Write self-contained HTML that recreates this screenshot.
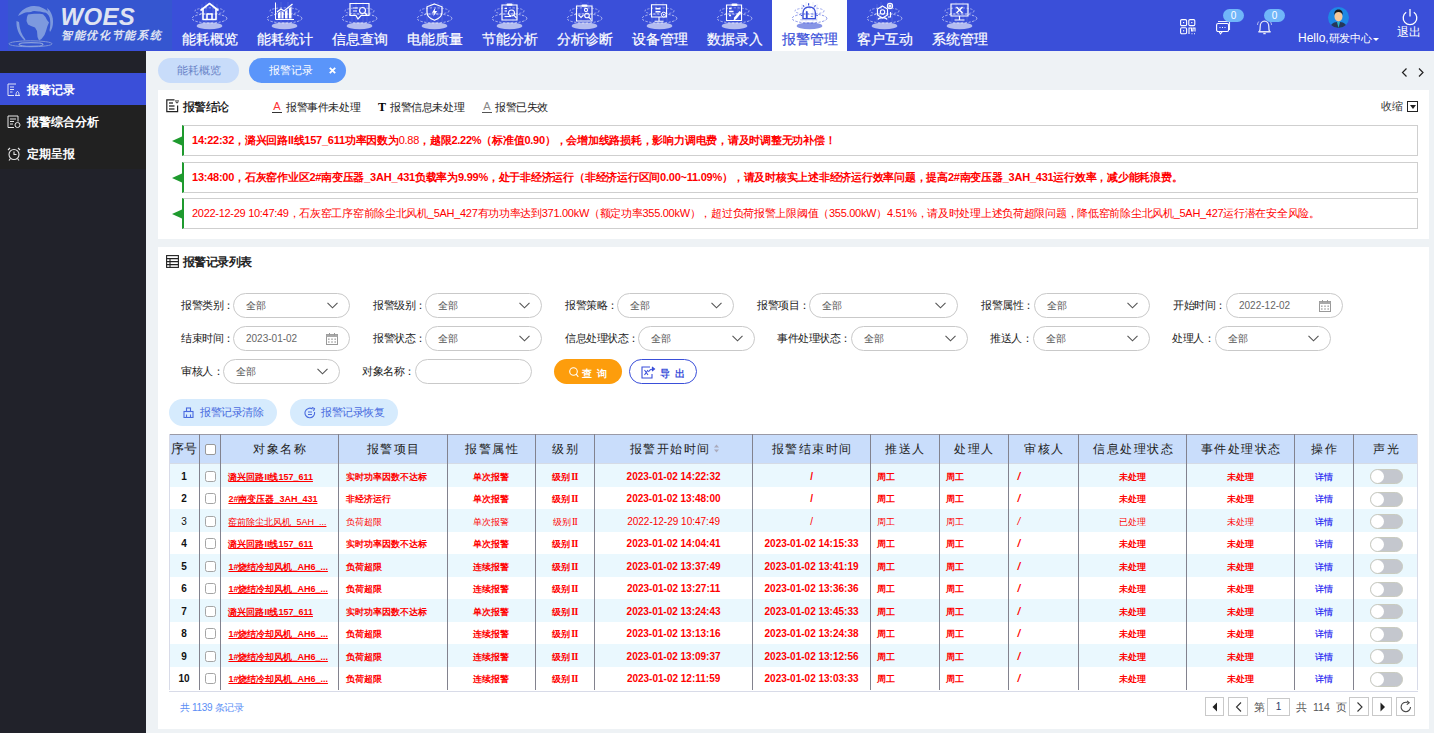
<!DOCTYPE html><html><head><meta charset="utf-8"><style>
*{box-sizing:border-box;margin:0;padding:0}
html,body{width:1434px;height:733px;overflow:hidden;background:#eef2f5;font-family:"Liberation Sans",sans-serif;color:#333}
.a{position:absolute;white-space:nowrap}
#hdr{position:absolute;left:0;top:0;width:1434px;height:51px;background:#3a4fd9}
#logo{position:absolute;left:8px;top:0;width:164px;height:50px;background:#3556d0}
.nav{position:absolute;top:0;width:75px;height:51px;color:#fff;text-align:center}
.nav.on{background:#fff;color:#3a4fd9}
.nav svg{position:absolute;left:19px;top:0}
.nav span{position:absolute;left:0;right:0;top:31px;font-size:14.3px;line-height:16px;letter-spacing:0;-webkit-text-stroke:0.2px currentColor}
#side{position:absolute;left:0;top:51px;width:146px;height:682px;background:#21222a}
.si{position:absolute;left:0;width:146px;height:32px;color:#fff;font-size:12.3px;font-weight:bold;line-height:35px;padding-left:27px;background:#212121}
.si.on{background:#3a4fd9}
.si svg{position:absolute;left:7px;top:10px}
.tab{position:absolute;top:58px;height:25px;border-radius:13px;font-size:11px;line-height:25px}
.panel{position:absolute;left:158px;width:1271px;background:#fff}
.f11{font-size:11px;letter-spacing:-0.4px}
.alert{position:absolute;left:182px;width:1236px;height:31px;border:1px solid #cfcfcf;border-left:2px solid #1e9a2e;color:#f00;font-size:11px;letter-spacing:-0.29px;line-height:29px;padding-left:8px}
.alert:before{content:"";position:absolute;left:-12px;top:10px;border-right:11px solid #1e9a2e;border-top:5px solid transparent;border-bottom:5px solid transparent}
.lbl{position:absolute;font-size:11px;letter-spacing:-0.45px;color:#222;line-height:25px}
.sel{position:absolute;height:25px;border:1px solid #c9c9c9;border-radius:13px;font-size:10px;color:#555;line-height:23px;padding-left:12px;background:#fff}
.sel svg{position:absolute;right:11px;top:8px}
.btn{position:absolute;height:25px;border-radius:13px;font-size:11px;line-height:25px}
table{position:absolute;left:168px;top:434px;border-collapse:collapse;table-layout:fixed}
</style></head><body>
<div id="hdr"><div id="logo">
<svg class="a" style="left:0;top:0" width="164" height="50" viewBox="0 0 164 50">
<defs><radialGradient id="gl" cx="45%" cy="40%" r="60%"><stop offset="0" stop-color="#7d98dc"/><stop offset="1" stop-color="#5877cf"/></radialGradient></defs>
<g fill="#7d99de">
<path d="M20 14.5 C24 13.8 30 13.5 35 14.3 L37.5 17 L39 20 L41 22.5 L39.5 26 L38 31 L36.5 35 L33.5 39 L31 40.5 L29.5 37 L29 31 L27 27.5 L23 26 L20 24.5 L18.5 21 L19 17 Z"/>
<path d="M10 16 C13 10 19 6.5 25 6 C32 5.5 39 9 43 15 L44.5 19 L42.5 18 C40 14 38 12 36 12.5 L32 11.5 C29 12 26 10 23 12 C20 12.5 18 12 16 13 C14 14 12 15 10 16 Z"/>
<path d="M8.5 21 C8 28 10.5 35 16.5 40.5 L17.5 39.5 C13.5 35 11.5 29 11 22 Z"/>
<path d="M39 8 C43 11 45 16 45 22 C45 26 44 29 42 32 L41.5 30 C42.5 26 43 20 40.5 14 Z"/>
</g>
<ellipse cx="22.5" cy="43.8" rx="21.5" ry="3" fill="none" stroke="#7f95d8" stroke-width="1"/>
<ellipse cx="23" cy="44.5" rx="12" ry="1.8" fill="none" stroke="#8aa0dc" stroke-width="1.2"/>
<text x="52.5" y="24.5" font-family="Liberation Sans" font-size="24" font-weight="bold" font-style="italic" fill="#dfe3f2" letter-spacing="0.3">WOES</text>
<text x="53" y="38.7" font-size="11" font-weight="bold" font-style="italic" fill="#dfe3f2" letter-spacing="1.7">智能优化节能系统</text>
</svg>
</div>
<div class="nav" style="left:172px"><svg width="37" height="30" viewBox="0 0 37 30"><ellipse cx="18.5" cy="25.9" rx="12.8" ry="3.3" fill="#b4bcf0"/><ellipse cx="18.5" cy="18.4" rx="17.4" ry="4.6" fill="none" stroke="#ffffff" stroke-opacity=".75" stroke-width=".8" stroke-dasharray="2.2 1.6"/><ellipse cx="18.5" cy="11" rx="14.7" ry="3.2" fill="none" stroke="#ffffff" stroke-opacity=".6" stroke-width=".8" stroke-dasharray="2.2 1.6"/><g stroke="#ffffff" stroke-opacity=".12" stroke-width="1"><line x1="11" y1="4" x2="11" y2="23"/><line x1="15" y1="2" x2="15" y2="23"/><line x1="22" y1="2" x2="22" y2="23"/><line x1="26" y1="4" x2="26" y2="23"/></g><g fill="none" stroke="#ffffff" stroke-width="1.6" stroke-linejoin="round"><path d="M9.5 10.5 L18.5 3.5 L27.5 10.5"/><path d="M12 9 V19.5 H25 V9"/><path d="M16 19.5 V14 H21 V19.5"/></g></svg><span>能耗概览</span></div>
<div class="nav" style="left:247px"><svg width="37" height="30" viewBox="0 0 37 30"><ellipse cx="18.5" cy="25.9" rx="12.8" ry="3.3" fill="#b4bcf0"/><ellipse cx="18.5" cy="18.4" rx="17.4" ry="4.6" fill="none" stroke="#ffffff" stroke-opacity=".75" stroke-width=".8" stroke-dasharray="2.2 1.6"/><ellipse cx="18.5" cy="11" rx="14.7" ry="3.2" fill="none" stroke="#ffffff" stroke-opacity=".6" stroke-width=".8" stroke-dasharray="2.2 1.6"/><g stroke="#ffffff" stroke-opacity=".12" stroke-width="1"><line x1="11" y1="4" x2="11" y2="23"/><line x1="15" y1="2" x2="15" y2="23"/><line x1="22" y1="2" x2="22" y2="23"/><line x1="26" y1="4" x2="26" y2="23"/></g><g stroke="#ffffff" fill="none" stroke-width="1"><path d="M9.5 2.5 V19.5 H28"/><path d="M11 12 L15 9 L18 11 L26.5 4" stroke-width="1.3"/></g><g fill="#ffffff"><path d="M12 13 L14.5 11 V18.5 H12Z"/><path d="M15.5 11 L17.5 12.2 V18.5 H15.5Z"/><path d="M19 11.5 L21.5 9.5 V18.5 H19Z"/><path d="M23 8.5 L25.5 6.5 V18.5 H23Z"/></g></svg><span>能耗统计</span></div>
<div class="nav" style="left:322px"><svg width="37" height="30" viewBox="0 0 37 30"><ellipse cx="18.5" cy="25.9" rx="12.8" ry="3.3" fill="#b4bcf0"/><ellipse cx="18.5" cy="18.4" rx="17.4" ry="4.6" fill="none" stroke="#ffffff" stroke-opacity=".75" stroke-width=".8" stroke-dasharray="2.2 1.6"/><ellipse cx="18.5" cy="11" rx="14.7" ry="3.2" fill="none" stroke="#ffffff" stroke-opacity=".6" stroke-width=".8" stroke-dasharray="2.2 1.6"/><g stroke="#ffffff" stroke-opacity=".12" stroke-width="1"><line x1="11" y1="4" x2="11" y2="23"/><line x1="15" y1="2" x2="15" y2="23"/><line x1="22" y1="2" x2="22" y2="23"/><line x1="26" y1="4" x2="26" y2="23"/></g><g fill="none" stroke="#ffffff" stroke-width="1.2"><path d="M9 3.5 H28 V15.5 H20 L17 19 L15 15.5 H9 Z"/><path d="M12 8 H17 M12 11 H16"/><circle cx="21.5" cy="10.5" r="3"/><path d="M23.8 12.8 L26.5 15.5"/></g></svg><span>信息查询</span></div>
<div class="nav" style="left:397px"><svg width="37" height="30" viewBox="0 0 37 30"><ellipse cx="18.5" cy="25.9" rx="12.8" ry="3.3" fill="#b4bcf0"/><ellipse cx="18.5" cy="18.4" rx="17.4" ry="4.6" fill="none" stroke="#ffffff" stroke-opacity=".75" stroke-width=".8" stroke-dasharray="2.2 1.6"/><ellipse cx="18.5" cy="11" rx="14.7" ry="3.2" fill="none" stroke="#ffffff" stroke-opacity=".6" stroke-width=".8" stroke-dasharray="2.2 1.6"/><g stroke="#ffffff" stroke-opacity=".12" stroke-width="1"><line x1="11" y1="4" x2="11" y2="23"/><line x1="15" y1="2" x2="15" y2="23"/><line x1="22" y1="2" x2="22" y2="23"/><line x1="26" y1="4" x2="26" y2="23"/></g><g fill="none" stroke="#ffffff" stroke-width="1.2"><path d="M18.5 4 L26 6.8 V12.3 C26 16 22.8 18.8 18.5 20.3 C14.2 18.8 11 16 11 12.3 V6.8 Z"/></g><path d="M19.5 7.3 L15.9 12.7 H18.3 L17.3 16.6 L21.2 11 H18.8 Z" fill="#ffffff"/></svg><span>电能质量</span></div>
<div class="nav" style="left:472px"><svg width="37" height="30" viewBox="0 0 37 30"><ellipse cx="18.5" cy="25.9" rx="12.8" ry="3.3" fill="#b4bcf0"/><ellipse cx="18.5" cy="18.4" rx="17.4" ry="4.6" fill="none" stroke="#ffffff" stroke-opacity=".75" stroke-width=".8" stroke-dasharray="2.2 1.6"/><ellipse cx="18.5" cy="11" rx="14.7" ry="3.2" fill="none" stroke="#ffffff" stroke-opacity=".6" stroke-width=".8" stroke-dasharray="2.2 1.6"/><g stroke="#ffffff" stroke-opacity=".12" stroke-width="1"><line x1="11" y1="4" x2="11" y2="23"/><line x1="15" y1="2" x2="15" y2="23"/><line x1="22" y1="2" x2="22" y2="23"/><line x1="26" y1="4" x2="26" y2="23"/></g><g fill="none" stroke="#ffffff" stroke-width="1.1"><path d="M11 5 H26 V20 H11 Z"/><path d="M13.5 8.5 H16 M13.5 11 H16 M13.5 16.5 H20"/><circle cx="20.5" cy="13" r="3"/><path d="M22.7 15.2 L25.5 18"/></g><rect x="15.5" y="3.5" width="6" height="2.2" rx="1" fill="#ffffff"/></svg><span>节能分析</span></div>
<div class="nav" style="left:547px"><svg width="37" height="30" viewBox="0 0 37 30"><ellipse cx="18.5" cy="25.9" rx="12.8" ry="3.3" fill="#b4bcf0"/><ellipse cx="18.5" cy="18.4" rx="17.4" ry="4.6" fill="none" stroke="#ffffff" stroke-opacity=".75" stroke-width=".8" stroke-dasharray="2.2 1.6"/><ellipse cx="18.5" cy="11" rx="14.7" ry="3.2" fill="none" stroke="#ffffff" stroke-opacity=".6" stroke-width=".8" stroke-dasharray="2.2 1.6"/><g stroke="#ffffff" stroke-opacity=".12" stroke-width="1"><line x1="11" y1="4" x2="11" y2="23"/><line x1="15" y1="2" x2="15" y2="23"/><line x1="22" y1="2" x2="22" y2="23"/><line x1="26" y1="4" x2="26" y2="23"/></g><g fill="none" stroke="#ffffff" stroke-width="1.1"><path d="M10.5 6 H26 V21 H10.5 Z"/><circle cx="20" cy="10" r="1.6"/><path d="M12.5 15 L15 17.5 L17.5 15"/><circle cx="21" cy="15.5" r="2.3"/><path d="M22.7 17.2 L25 19.5"/></g><rect x="15.5" y="4.5" width="6" height="2.2" rx="1" fill="#ffffff"/></svg><span>分析诊断</span></div>
<div class="nav" style="left:622px"><svg width="37" height="30" viewBox="0 0 37 30"><ellipse cx="18.5" cy="25.9" rx="12.8" ry="3.3" fill="#b4bcf0"/><ellipse cx="18.5" cy="18.4" rx="17.4" ry="4.6" fill="none" stroke="#ffffff" stroke-opacity=".75" stroke-width=".8" stroke-dasharray="2.2 1.6"/><ellipse cx="18.5" cy="11" rx="14.7" ry="3.2" fill="none" stroke="#ffffff" stroke-opacity=".6" stroke-width=".8" stroke-dasharray="2.2 1.6"/><g stroke="#ffffff" stroke-opacity=".12" stroke-width="1"><line x1="11" y1="4" x2="11" y2="23"/><line x1="15" y1="2" x2="15" y2="23"/><line x1="22" y1="2" x2="22" y2="23"/><line x1="26" y1="4" x2="26" y2="23"/></g><g fill="none" stroke="#ffffff" stroke-width="1.1"><path d="M10.5 4.8 H25.5 V17 H10.5 Z"/><path d="M18 17 V21 M13.5 21.3 H22.5"/><path d="M14.5 8.8 H19.5 M14.5 11.8 H19.5" stroke-width="1.5"/></g><circle cx="22.8" cy="14.6" r="2.4" fill="#3a4fd9" stroke="#ffffff" stroke-width="1"/><circle cx="22.8" cy="14.6" r=".9" fill="#ffffff"/></svg><span>设备管理</span></div>
<div class="nav" style="left:697px"><svg width="37" height="30" viewBox="0 0 37 30"><ellipse cx="18.5" cy="25.9" rx="12.8" ry="3.3" fill="#b4bcf0"/><ellipse cx="18.5" cy="18.4" rx="17.4" ry="4.6" fill="none" stroke="#ffffff" stroke-opacity=".75" stroke-width=".8" stroke-dasharray="2.2 1.6"/><ellipse cx="18.5" cy="11" rx="14.7" ry="3.2" fill="none" stroke="#ffffff" stroke-opacity=".6" stroke-width=".8" stroke-dasharray="2.2 1.6"/><g stroke="#ffffff" stroke-opacity=".12" stroke-width="1"><line x1="11" y1="4" x2="11" y2="23"/><line x1="15" y1="2" x2="15" y2="23"/><line x1="22" y1="2" x2="22" y2="23"/><line x1="26" y1="4" x2="26" y2="23"/></g><g fill="none" stroke="#ffffff" stroke-width="1.1"><path d="M10.5 5 H25.5 V20.5 H10.5 Z"/><path d="M13 8.5 H15.5 M13 11.5 H17.5 M13 15.5 H15" stroke-width="1.3"/></g><rect x="15.5" y="3.6" width="6" height="2.4" rx="1.1" fill="#ffffff"/><path d="M17.6 20.4 L18.1 17.6 L23.6 10.9 L25.6 12.5 L20.1 19.2 Z" fill="#ffffff"/></svg><span>数据录入</span></div>
<div class="nav on" style="left:772px"><svg width="37" height="30" viewBox="0 0 37 30"><ellipse cx="18.5" cy="25.9" rx="12.8" ry="3.3" fill="#8795e6"/><ellipse cx="18.5" cy="18.4" rx="17.4" ry="4.6" fill="none" stroke="#3a4fd9" stroke-opacity=".75" stroke-width=".8" stroke-dasharray="2.2 1.6"/><ellipse cx="18.5" cy="11" rx="14.7" ry="3.2" fill="none" stroke="#3a4fd9" stroke-opacity=".6" stroke-width=".8" stroke-dasharray="2.2 1.6"/><g stroke="#3a4fd9" stroke-opacity=".12" stroke-width="1"><line x1="11" y1="4" x2="11" y2="23"/><line x1="15" y1="2" x2="15" y2="23"/><line x1="22" y1="2" x2="22" y2="23"/><line x1="26" y1="4" x2="26" y2="23"/></g><g fill="none" stroke="#3a4fd9"><path d="M12 18.6 V13 C12 9.3 14.8 7 18.2 7 C21.6 7 24.4 9.3 24.4 13 V18.6 Z" stroke-width="1.4"/><path d="M15.8 17.8 V12" stroke-width="1.8" stroke-linecap="round"/><path d="M19.8 16.4 H21.8" stroke-width=".8"/><path d="M17.6 3.2 V5.4 M12 5.3 L13.2 6.7 M24.6 5.3 L23.4 6.7 M9.8 15.5 H11.3 M25.3 15.5 H26.8" stroke-width="1.2"/><path d="M9 19.8 H26" stroke-width="1" stroke-opacity=".35"/></g></svg><span>报警管理</span></div>
<div class="nav" style="left:847px"><svg width="37" height="30" viewBox="0 0 37 30"><ellipse cx="18.5" cy="25.9" rx="12.8" ry="3.3" fill="#b4bcf0"/><ellipse cx="18.5" cy="18.4" rx="17.4" ry="4.6" fill="none" stroke="#ffffff" stroke-opacity=".75" stroke-width=".8" stroke-dasharray="2.2 1.6"/><ellipse cx="18.5" cy="11" rx="14.7" ry="3.2" fill="none" stroke="#ffffff" stroke-opacity=".6" stroke-width=".8" stroke-dasharray="2.2 1.6"/><g stroke="#ffffff" stroke-opacity=".12" stroke-width="1"><line x1="11" y1="4" x2="11" y2="23"/><line x1="15" y1="2" x2="15" y2="23"/><line x1="22" y1="2" x2="22" y2="23"/><line x1="26" y1="4" x2="26" y2="23"/></g><g fill="none" stroke="#ffffff" stroke-width="1.1"><path d="M16.5 6 L21.5 9 V15 L16.5 18 L11.5 15 V9 Z"/><circle cx="16.5" cy="12" r="2.2"/><circle cx="24" cy="6" r="2.6"/><circle cx="24" cy="6" r="1"/><path d="M12 19.5 C13 17 20 17 21 19.5 M24.5 12 V17 H22"/></g></svg><span>客户互动</span></div>
<div class="nav" style="left:922px"><svg width="37" height="30" viewBox="0 0 37 30"><ellipse cx="18.5" cy="25.9" rx="12.8" ry="3.3" fill="#b4bcf0"/><ellipse cx="18.5" cy="18.4" rx="17.4" ry="4.6" fill="none" stroke="#ffffff" stroke-opacity=".75" stroke-width=".8" stroke-dasharray="2.2 1.6"/><ellipse cx="18.5" cy="11" rx="14.7" ry="3.2" fill="none" stroke="#ffffff" stroke-opacity=".6" stroke-width=".8" stroke-dasharray="2.2 1.6"/><g stroke="#ffffff" stroke-opacity=".12" stroke-width="1"><line x1="11" y1="4" x2="11" y2="23"/><line x1="15" y1="2" x2="15" y2="23"/><line x1="22" y1="2" x2="22" y2="23"/><line x1="26" y1="4" x2="26" y2="23"/></g><g fill="none" stroke="#ffffff" stroke-width="1.2"><path d="M10 4 H27 V16 H10 Z"/><path d="M18.5 16 V19.5 M13.5 20 H23.5"/><path d="M15.5 7 L21.5 13 M21.5 7 L15.5 13" stroke-width="1.5"/></g></svg><span>系统管理</span></div>
<svg class="a" style="left:1180px;top:19px" width="16" height="16" viewBox="0 0 16 16" fill="none" stroke="#fff" stroke-width="1.1">
<rect x="0.6" y="0.6" width="6" height="6" rx="1.2"/><rect x="8.8" y="0.6" width="6" height="6" rx="1.2"/><rect x="0.6" y="8.8" width="6" height="6" rx="1.2"/>
<rect x="3" y="3" width="1.2" height="1.2" fill="#fff" stroke="none"/><rect x="11.2" y="3" width="1.2" height="1.2" fill="#fff" stroke="none"/><rect x="3" y="11.2" width="1.2" height="1.2" fill="#fff" stroke="none"/>
<path d="M9 15 V9 H11.5 V12 H13 V9 H15 V12.5"/><path d="M11.5 14.8 H12.5 M14 14.8 H15"/></svg>
<svg class="a" style="left:1216px;top:19px" width="16" height="16" viewBox="0 0 16 16" fill="none" stroke="#fff" stroke-width="1.1">
<path d="M2 2.5 H13.5 V11" stroke-opacity=".9"/><rect x="0.6" y="4.5" width="12" height="8" rx="1.5"/><path d="M3 12.5 L4.5 14.8 L6.5 12.5"/>
<path d="M3.5 8.5 H4.5 M6 8.5 H7 M8.5 8.5 H9.5"/></svg>
<svg class="a" style="left:1256px;top:19px" width="17" height="16" viewBox="0 0 17 16" fill="none" stroke="#e4e7f8" stroke-width="1.3">
<path d="M3.5 12.6 C4 11.5 4.2 10 4.2 7.5 C4.2 4.5 6 2.2 8.5 2.2 C11 2.2 12.8 4.5 12.8 7.5 C12.8 10 13 11.5 13.5 12.6 Z" stroke-linejoin="round"/><path d="M2.2 12.8 H14.8"/><path d="M7.3 14.6 H9.7"/><path d="M1.5 6 C1.5 4.5 2 3.3 2.8 2.5 M15.5 6 C15.5 4.5 15 3.3 14.2 2.5" stroke-opacity=".7" stroke-width="1"/></svg>
<div class="a" style="left:1223px;top:9px;width:21px;height:13px;border-radius:7px;background:#70b6f9;color:#fff;font-size:10px;line-height:13px;text-align:center">0</div>
<div class="a" style="left:1264px;top:9px;width:21px;height:13px;border-radius:7px;background:#70b6f9;color:#fff;font-size:10px;line-height:13px;text-align:center">0</div>
<svg class="a" style="left:1328px;top:7px" width="21" height="21" viewBox="0 0 21 21">
<circle cx="10.5" cy="10.5" r="10.5" fill="#1e88e5"/>
<clipPath id="av"><circle cx="10.5" cy="10.5" r="10.5"/></clipPath>
<g clip-path="url(#av)"><path d="M2 21 C3 16 6 15 10.5 15 C15 15 18 16 19 21Z" fill="#263859"/><path d="M9 15 L10.5 21 L12 15Z" fill="#29b6c9"/>
<ellipse cx="10.5" cy="9.5" rx="4" ry="5" fill="#f6c89a"/><path d="M6.3 8 C6 4 8 2.5 10.5 2.5 C13 2.5 15 4 14.7 8 C14 6 13 5 10.5 5 C8 5 7 6 6.3 8Z" fill="#1b1b1b"/></g></svg>
<div class="a" style="left:1298px;top:30px;color:#fff;font-size:12px;line-height:16px">Hello,<span style="font-size:11px;letter-spacing:-0.3px">研发中心</span></div>
<div class="a" style="left:1373px;top:37.5px;border-top:3.5px solid #fff;border-left:3.5px solid transparent;border-right:3.5px solid transparent"></div>
<svg class="a" style="left:1401px;top:8px" width="18" height="18" viewBox="0 0 18 18" fill="none" stroke="#fff" stroke-width="1.3">
<path d="M5.2 4.2 A6.8 6.8 0 1 0 12.8 4.2"/><path d="M9 1 V8.5"/></svg>
<div class="a" style="left:1397px;top:25px;color:#fff;font-size:12px;line-height:14px">退出</div>
</div>
<div id="side">

<div class="si on" style="top:22px"><svg width="14" height="14" viewBox="0 0 14 14"><g fill="none" stroke="#dfe3f7" stroke-width="1"><path d="M9 1 H1 V12.5 H7"/><path d="M3 4 H7 M3 6.5 H7 M3 9 H5.5"/><path d="M8 12.5 H13 M9 12 C9 9.5 10 8.5 10.5 8.5 C11 8.5 12 9.5 12 12"/></g></svg>报警记录</div>
<div class="si" style="top:54px"><svg width="14" height="14" viewBox="0 0 14 14"><g fill="none" stroke="#e6e6e6" stroke-width="1"><path d="M1 1 H11 V6.5 M1 1 V12.5 H7"/><path d="M3 4 H9 M3 6.5 H7 M3 9 H6"/><circle cx="10.5" cy="10" r="2.5"/></g></svg>报警综合分析</div>
<div class="si" style="top:86px"><svg width="14" height="14" viewBox="0 0 14 14"><g fill="none" stroke="#e6e6e6" stroke-width="1.1"><circle cx="7" cy="7.5" r="5"/><path d="M7 4.5 V7.5 H9.5"/><path d="M1 3 L3 1 M13 3 L11 1 M3.5 11.5 L2 13.5 M10.5 11.5 L12 13.5"/></g></svg>定期呈报</div>
</div>
<div class="tab" style="left:158px;width:81px;background:#c8dcfa;color:#6a84c8;text-align:center">能耗概览</div>
<div class="tab" style="left:249px;width:97px;background:#5a95fa;color:#fff;padding-left:20px">报警记录<svg class="a" style="left:80px;top:9px" width="7" height="7" viewBox="0 0 7 7" stroke="#fff" stroke-width="1.8"><path d="M0.8 0.8 L6.2 6.2 M6.2 0.8 L0.8 6.2"/></svg></div>
<svg class="a" style="left:1401px;top:68px" width="24" height="9" viewBox="0 0 24 9" fill="none" stroke="#222" stroke-width="1.2"><path d="M5.5 0.5 L1.5 4.5 L5.5 8.5"/><path d="M18 0.5 L22 4.5 L18 8.5"/></svg>
<div class="panel" style="top:90px;height:149px"></div>
<svg class="a" style="left:166px;top:99px" width="13" height="14" viewBox="0 0 13 14" fill="none" stroke="#222" stroke-width="1.2">
<path d="M8.5 0.8 H0.8 V12.6 H11.6 V6.5"/><path d="M3 4 H7 M3 7 H8.5 M3 10 H8.5" stroke-width="1.3" stroke="#444"/><path d="M10 1 V2.8 C10 3.6 10.5 4 11 4 C11.5 4 12 3.6 12 2.8 V1" stroke-width="1"/></svg>
<div class="a" style="left:183px;top:99px;line-height:16px;color:#000;font-size:11.5px;letter-spacing:-0.7px;-webkit-text-stroke:0.2px #000">报警结论</div>
<div class="a" style="left:272px;top:100px;width:10px;height:13px;border-bottom:1px solid #333;color:#f33;font-size:11px;line-height:12px;text-align:center">A</div>
<div class="a f11" style="left:286px;top:99px;line-height:16px;color:#222">报警事件未处理</div>
<div class="a" style="left:378px;top:99px;color:#000;font-family:'Liberation Serif',serif;font-weight:bold;font-size:12px;line-height:16px">T</div>
<div class="a f11" style="left:390px;top:99px;line-height:16px;color:#222">报警信息未处理</div>
<div class="a" style="left:482px;top:100px;width:10px;height:13px;border-bottom:1px solid #555;color:#888;font-size:11px;line-height:12px;text-align:center">A</div>
<div class="a f11" style="left:495px;top:99px;line-height:16px;color:#222">报警已失效</div>
<div class="a f11" style="left:1381px;top:98px;line-height:16px;color:#333">收缩</div>
<div class="a" style="left:1407px;top:101px;width:11px;height:11px;border:1px solid #222"><div class="a" style="left:2px;top:3px;border-top:4px solid #222;border-left:3px solid transparent;border-right:3px solid transparent"></div></div>
<div class="alert" id="m0" style="top:125.0px;letter-spacing:-0.24px"><span><b>14:22:32，潞兴回路II线157_611功率因数为</b>0.88<b>，越限2.22%（标准值0.90），会增加线路损耗，影响力调电费，请及时调整无功补偿！</b></span></div>
<div class="alert" id="m1" style="top:161.5px;letter-spacing:-0.24px"><span><b>13:48:00，石灰窑作业区2#南变压器_3AH_431负载率为9.99%，处于非经济运行（非经济运行区间0.00~11.09%），请及时核实上述非经济运行效率问题，提高2#南变压器_3AH_431运行效率，减少能耗浪费。</b></span></div>
<div class="alert" id="m2" style="top:198.0px;"><span>2022-12-29 10:47:49，石灰窑工序窑前除尘北风机_5AH_427有功功率达到371.00kW（额定功率355.00kW），超过负荷报警上限阈值（355.00kW）4.51%，请及时处理上述负荷超限问题，降低窑前除尘北风机_5AH_427运行潜在安全风险。</span></div>
<div class="panel" style="top:247px;height:482px"></div>
<svg class="a" style="left:166px;top:255px" width="13" height="13" viewBox="0 0 13 13" fill="none" stroke="#222" stroke-width="1.1">
<rect x="0.6" y="0.6" width="11.8" height="11.8"/><path d="M0.6 3.6 H12.4 M0.6 6.6 H12.4 M0.6 9.6 H12.4 M4 3.6 V12.4"/></svg>
<div class="a" style="left:183px;top:254px;line-height:16px;color:#222;font-size:11.5px;font-weight:bold;letter-spacing:-0.6px">报警记录列表</div>
<div class="lbl" style="left:181px;top:293px">报警类别：</div>
<div class="sel" style="left:233px;top:293px;width:117px">全部<svg width="11" height="7" viewBox="0 0 11 7" fill="none" stroke="#555" stroke-width="1.1"><path d="M0.5 0.8 L5.5 5.8 L10.5 0.8"/></svg></div>
<div class="lbl" style="left:373px;top:293px">报警级别：</div>
<div class="sel" style="left:425px;top:293px;width:117px">全部<svg width="11" height="7" viewBox="0 0 11 7" fill="none" stroke="#555" stroke-width="1.1"><path d="M0.5 0.8 L5.5 5.8 L10.5 0.8"/></svg></div>
<div class="lbl" style="left:565px;top:293px">报警策略：</div>
<div class="sel" style="left:617px;top:293px;width:117px">全部<svg width="11" height="7" viewBox="0 0 11 7" fill="none" stroke="#555" stroke-width="1.1"><path d="M0.5 0.8 L5.5 5.8 L10.5 0.8"/></svg></div>
<div class="lbl" style="left:757px;top:293px">报警项目：</div>
<div class="sel" style="left:809px;top:293px;width:149px">全部<svg width="11" height="7" viewBox="0 0 11 7" fill="none" stroke="#555" stroke-width="1.1"><path d="M0.5 0.8 L5.5 5.8 L10.5 0.8"/></svg></div>
<div class="lbl" style="left:981px;top:293px">报警属性：</div>
<div class="sel" style="left:1034px;top:293px;width:116px">全部<svg width="11" height="7" viewBox="0 0 11 7" fill="none" stroke="#555" stroke-width="1.1"><path d="M0.5 0.8 L5.5 5.8 L10.5 0.8"/></svg></div>
<div class="lbl" style="left:1173px;top:293px">开始时间：</div>
<div class="sel" style="left:1226px;top:293px;width:117px;color:#666">2022-12-02<svg class=a width="12" height="12" viewBox="0 0 12 12" style="top:6px;right:11px"><rect x="0.5" y="1.5" width="11" height="10" fill="none" stroke="#999"/><rect x="0.5" y="1.5" width="11" height="2.5" fill="#aaa"/><g fill="#aaa"><rect x="2" y="5.5" width="1.6" height="1.4"/><rect x="5.2" y="5.5" width="1.6" height="1.4"/><rect x="8.4" y="5.5" width="1.6" height="1.4"/><rect x="2" y="8.3" width="1.6" height="1.4"/><rect x="5.2" y="8.3" width="1.6" height="1.4"/><rect x="8.4" y="8.3" width="1.6" height="1.4"/></g><rect x="3" y="0" width="1" height="2.5" fill="#999"/><rect x="8" y="0" width="1" height="2.5" fill="#999"/></svg></div>
<div class="lbl" style="left:181px;top:326px">结束时间：</div>
<div class="sel" style="left:233px;top:326px;width:117px;color:#666">2023-01-02<svg class=a width="12" height="12" viewBox="0 0 12 12" style="top:6px;right:11px"><rect x="0.5" y="1.5" width="11" height="10" fill="none" stroke="#999"/><rect x="0.5" y="1.5" width="11" height="2.5" fill="#aaa"/><g fill="#aaa"><rect x="2" y="5.5" width="1.6" height="1.4"/><rect x="5.2" y="5.5" width="1.6" height="1.4"/><rect x="8.4" y="5.5" width="1.6" height="1.4"/><rect x="2" y="8.3" width="1.6" height="1.4"/><rect x="5.2" y="8.3" width="1.6" height="1.4"/><rect x="8.4" y="8.3" width="1.6" height="1.4"/></g><rect x="3" y="0" width="1" height="2.5" fill="#999"/><rect x="8" y="0" width="1" height="2.5" fill="#999"/></svg></div>
<div class="lbl" style="left:373px;top:326px">报警状态：</div>
<div class="sel" style="left:425px;top:326px;width:117px">全部<svg width="11" height="7" viewBox="0 0 11 7" fill="none" stroke="#555" stroke-width="1.1"><path d="M0.5 0.8 L5.5 5.8 L10.5 0.8"/></svg></div>
<div class="lbl" style="left:565px;top:326px">信息处理状态：</div>
<div class="sel" style="left:638px;top:326px;width:117px">全部<svg width="11" height="7" viewBox="0 0 11 7" fill="none" stroke="#555" stroke-width="1.1"><path d="M0.5 0.8 L5.5 5.8 L10.5 0.8"/></svg></div>
<div class="lbl" style="left:777px;top:326px">事件处理状态：</div>
<div class="sel" style="left:851px;top:326px;width:117px">全部<svg width="11" height="7" viewBox="0 0 11 7" fill="none" stroke="#555" stroke-width="1.1"><path d="M0.5 0.8 L5.5 5.8 L10.5 0.8"/></svg></div>
<div class="lbl" style="left:990px;top:326px">推送人：</div>
<div class="sel" style="left:1033px;top:326px;width:117px">全部<svg width="11" height="7" viewBox="0 0 11 7" fill="none" stroke="#555" stroke-width="1.1"><path d="M0.5 0.8 L5.5 5.8 L10.5 0.8"/></svg></div>
<div class="lbl" style="left:1172px;top:326px">处理人：</div>
<div class="sel" style="left:1215px;top:326px;width:116px">全部<svg width="11" height="7" viewBox="0 0 11 7" fill="none" stroke="#555" stroke-width="1.1"><path d="M0.5 0.8 L5.5 5.8 L10.5 0.8"/></svg></div>
<div class="lbl" style="left:181px;top:359px">审核人：</div>
<div class="sel" style="left:223px;top:359px;width:117px">全部<svg width="11" height="7" viewBox="0 0 11 7" fill="none" stroke="#555" stroke-width="1.1"><path d="M0.5 0.8 L5.5 5.8 L10.5 0.8"/></svg></div>
<div class="lbl" style="left:362px;top:359px">对象名称：</div>
<div class="sel" style="left:415px;top:359px;width:117px"></div>
<div class="btn" style="left:554px;top:359px;width:68px;background:#fd9d0c;color:#fff">
<svg class="a" style="left:15px;top:8px" width="10" height="11" viewBox="0 0 10 11" fill="none" stroke="#fff" stroke-width="1.1"><circle cx="4.5" cy="4.5" r="3.8"/><path d="M7.2 7.2 L9.3 9.8"/></svg>
<span class="a" style="left:28px;top:1.5px;font-size:9.5px;font-weight:bold;letter-spacing:5px">查询</span></div>
<div class="btn" style="left:629px;top:359px;width:68px;border:1px solid #3a4fd9;color:#3a4fd9;background:#fff">
<svg class="a" style="left:11px;top:6px" width="15" height="13" viewBox="0 0 15 13" fill="none" stroke="#3a4fd9" stroke-width="1.1"><path d="M9 1 H1 V12 H11 V8"/><path d="M3.5 4 L7 9 M7 4 L3.5 9"/><path d="M7.5 6 C8.5 3.5 10 3 12.5 3" /><path d="M11 1 L13.5 3 L11 5" fill="#3a4fd9"/></svg>
<span class="a" style="left:30px;top:0.5px;font-size:9.5px;font-weight:bold;letter-spacing:5px">导出</span></div>
<div class="btn" style="left:169px;top:399px;width:108px;height:27px;border-radius:14px;background:#d6ebfd;color:#4a6bdf">
<svg class="a" style="left:14px;top:8px" width="11" height="11" viewBox="0 0 11 11" fill="none" stroke="#4a6bdf" stroke-width="1.1"><rect x="1" y="4.5" width="9" height="6"/><rect x="3.5" y="1" width="4" height="3.5"/><path d="M3.5 7.5 V10.5 M7.5 7.5 V10.5"/></svg>
<span class="a" style="left:31px;top:1px;letter-spacing:-0.5px">报警记录清除</span></div>
<div class="btn" style="left:290px;top:399px;width:108px;height:27px;border-radius:14px;background:#d6ebfd;color:#4a6bdf">
<svg class="a" style="left:14px;top:8px" width="12" height="12" viewBox="0 0 12 12" fill="none" stroke="#4a6bdf" stroke-width="1.1"><path d="M10.5 5 A4.8 4.8 0 1 1 8.5 2"/><path d="M8 0.5 L10.5 1.5 L9.5 4"/><path d="M4 5 H8 M4 7.5 H8"/></svg>
<span class="a" style="left:31px;top:1px;letter-spacing:-0.5px">报警记录恢复</span></div>
<div class="a" style="left:168.5px;top:434px;width:1249.7px;height:30px;background:#c9ddfb;border-top:1px solid #9a9aa6"></div><div class="a" style="left:168.5px;top:463px;width:1249.7px;height:1px;background:#d5dbe6"></div>
<div class="a" style="left:168.5px;top:464.0px;width:1249.7px;height:22.85px;background:#eaf8fe"></div>
<div class="a" style="left:168.5px;top:486.55px;width:1249.7px;height:22.85px;background:#fff"></div>
<div class="a" style="left:168.5px;top:509.1px;width:1249.7px;height:22.85px;background:#eaf8fe"></div>
<div class="a" style="left:168.5px;top:531.65px;width:1249.7px;height:22.85px;background:#fff"></div>
<div class="a" style="left:168.5px;top:554.2px;width:1249.7px;height:22.85px;background:#eaf8fe"></div>
<div class="a" style="left:168.5px;top:576.75px;width:1249.7px;height:22.85px;background:#fff"></div>
<div class="a" style="left:168.5px;top:599.3px;width:1249.7px;height:22.85px;background:#eaf8fe"></div>
<div class="a" style="left:168.5px;top:621.85px;width:1249.7px;height:22.85px;background:#fff"></div>
<div class="a" style="left:168.5px;top:644.4px;width:1249.7px;height:22.85px;background:#eaf8fe"></div>
<div class="a" style="left:168.5px;top:666.95px;width:1249.7px;height:22.85px;background:#fff"></div>
<div class="a" style="left:168.5px;top:434px;width:1px;height:255.5px;background:#d8dbe8"></div>
<div class="a" style="left:1417.2px;top:434px;width:1px;height:255.5px;background:#d8dbe8"></div>
<div class="a" style="left:168.5px;top:690.5px;width:1249.7px;height:1px;background:#d8dbe8"></div>
<div class="a" style="left:199.0px;top:434px;width:1.2px;height:255.5px;background:#82828e"></div>
<div class="a" style="left:219.9px;top:434px;width:1.2px;height:255.5px;background:#82828e"></div>
<div class="a" style="left:337.9px;top:434px;width:1.2px;height:255.5px;background:#82828e"></div>
<div class="a" style="left:447.0px;top:434px;width:1.2px;height:255.5px;background:#82828e"></div>
<div class="a" style="left:534.9px;top:434px;width:1.2px;height:255.5px;background:#82828e"></div>
<div class="a" style="left:594.0px;top:434px;width:1.2px;height:255.5px;background:#82828e"></div>
<div class="a" style="left:752.2px;top:434px;width:1.2px;height:255.5px;background:#82828e"></div>
<div class="a" style="left:869.9px;top:434px;width:1.2px;height:255.5px;background:#82828e"></div>
<div class="a" style="left:938.9px;top:434px;width:1.2px;height:255.5px;background:#82828e"></div>
<div class="a" style="left:1007.9px;top:434px;width:1.2px;height:255.5px;background:#82828e"></div>
<div class="a" style="left:1078.3px;top:434px;width:1.2px;height:255.5px;background:#82828e"></div>
<div class="a" style="left:1186.3px;top:434px;width:1.2px;height:255.5px;background:#82828e"></div>
<div class="a" style="left:1294.1px;top:434px;width:1.2px;height:255.5px;background:#82828e"></div>
<div class="a" style="left:1353.0px;top:434px;width:1.2px;height:255.5px;background:#82828e"></div>
<div class="a" style="left:168.5px;top:434px;width:31.0px;height:30px;line-height:30px;text-align:center;font-size:13px;letter-spacing:0px;text-indent:0px;color:#222">序号</div>
<div class="a" style="left:204.5px;top:443.5px;width:11px;height:11px;border:1px solid #999;border-radius:2px;background:#fff"></div>
<div class="a" style="left:220.4px;top:434px;width:117.99999999999997px;height:30px;line-height:30px;text-align:center;font-size:12px;letter-spacing:1.5px;text-indent:1.5px;color:#222">对象名称</div>
<div class="a" style="left:338.4px;top:434px;width:109.10000000000002px;height:30px;line-height:30px;text-align:center;font-size:12px;letter-spacing:1.5px;text-indent:1.5px;color:#222">报警项目</div>
<div class="a" style="left:447.5px;top:434px;width:87.89999999999998px;height:30px;line-height:30px;text-align:center;font-size:12px;letter-spacing:1.5px;text-indent:1.5px;color:#222">报警属性</div>
<div class="a" style="left:535.4px;top:434px;width:59.10000000000002px;height:30px;line-height:30px;text-align:center;font-size:12px;letter-spacing:1.5px;text-indent:1.5px;color:#222">级别</div>
<div class="a" style="left:594.5px;top:434px;width:158.20000000000005px;height:30px;line-height:30px;text-align:center;font-size:12px;letter-spacing:1.5px;text-indent:1.5px;color:#222">报警开始时间<svg style="margin-left:3px;vertical-align:0px" width="5" height="9" viewBox="0 0 5 9"><path d="M0 3.5 L2.5 0.5 L5 3.5Z M0 5.5 L2.5 8.5 L5 5.5Z" fill="#aab"/></svg></div>
<div class="a" style="left:752.7px;top:434px;width:117.69999999999993px;height:30px;line-height:30px;text-align:center;font-size:12px;letter-spacing:1.5px;text-indent:1.5px;color:#222">报警结束时间</div>
<div class="a" style="left:870.4px;top:434px;width:69.0px;height:30px;line-height:30px;text-align:center;font-size:12px;letter-spacing:1.5px;text-indent:1.5px;color:#222">推送人</div>
<div class="a" style="left:939.4px;top:434px;width:69.0px;height:30px;line-height:30px;text-align:center;font-size:12px;letter-spacing:1.5px;text-indent:1.5px;color:#222">处理人</div>
<div class="a" style="left:1008.4px;top:434px;width:70.39999999999998px;height:30px;line-height:30px;text-align:center;font-size:12px;letter-spacing:1.5px;text-indent:1.5px;color:#222">审核人</div>
<div class="a" style="left:1078.8px;top:434px;width:108.0px;height:30px;line-height:30px;text-align:center;font-size:12px;letter-spacing:1.5px;text-indent:1.5px;color:#222">信息处理状态</div>
<div class="a" style="left:1186.8px;top:434px;width:107.79999999999995px;height:30px;line-height:30px;text-align:center;font-size:12px;letter-spacing:1.5px;text-indent:1.5px;color:#222">事件处理状态</div>
<div class="a" style="left:1294.6px;top:434px;width:58.90000000000009px;height:30px;line-height:30px;text-align:center;font-size:12px;letter-spacing:1.5px;text-indent:1.5px;color:#222">操作</div>
<div class="a" style="left:1353.5px;top:434px;width:64.70000000000005px;height:30px;line-height:30px;text-align:center;font-size:12px;letter-spacing:1.5px;text-indent:1.5px;color:#222">声光</div>
<div class="a" style="left:168.5px;top:465.5px;width:31.0px;height:22.55px;line-height:22.55px;text-align:center;font-size:10px;color:#111;font-weight:bold;">1</div>
<div class="a" style="left:204.5px;top:470.5px;width:11px;height:11px;border:1px solid #a5a5a5;border-radius:2.5px;background:#fff"></div>
<div class="a" style="left:228.4px;top:465.5px;height:22.55px;line-height:22.55px;font-size:9px;color:#f00;font-weight:bold;"><u>潞兴回路II线157_611</u></div>
<div class="a" style="left:346.4px;top:465.5px;height:22.55px;line-height:22.55px;font-size:9px;color:#f00;font-weight:bold;">实时功率因数不达标</div>
<div class="a" style="left:447.5px;top:465.5px;width:87.89999999999998px;height:22.55px;line-height:22.55px;text-align:center;font-size:9px;color:#f00;font-weight:bold;">单次报警</div>
<div class="a" style="left:535.4px;top:465.5px;width:59.10000000000002px;height:22.55px;line-height:22.55px;text-align:center;font-size:9px;color:#f00;font-weight:bold;">级别<span style="font-family:Liberation Serif;font-size:10px;letter-spacing:-0.8px;margin-left:1px">II</span></div>
<div class="a" style="left:594.5px;top:465.5px;width:158.20000000000005px;height:22.55px;line-height:22.55px;text-align:center;font-size:10px;color:#f00;font-weight:bold;">2023-01-02 14:22:32</div>
<div class="a" style="left:752.7px;top:465.5px;width:117.69999999999993px;height:22.55px;line-height:22.55px;text-align:center;font-size:10px;color:#f00;font-weight:bold;">/</div>
<div class="a" style="left:877.4px;top:465.5px;height:22.55px;line-height:22.55px;font-size:9px;color:#f00;font-weight:bold;">周工</div>
<div class="a" style="left:946.4px;top:465.5px;height:22.55px;line-height:22.55px;font-size:9px;color:#f00;font-weight:bold;">周工</div>
<div class="a" style="left:1017.4px;top:465.5px;height:22.55px;line-height:22.55px;font-size:10px;font-style:italic;color:#f00;font-weight:bold;">/</div>
<div class="a" style="left:1078.8px;top:465.5px;width:108.0px;height:22.55px;line-height:22.55px;text-align:center;font-size:9px;color:#f00;font-weight:bold;">未处理</div>
<div class="a" style="left:1186.8px;top:465.5px;width:107.79999999999995px;height:22.55px;line-height:22.55px;text-align:center;font-size:9px;color:#f00;font-weight:bold;">未处理</div>
<div class="a" style="left:1294.6px;top:465.5px;width:58.90000000000009px;height:22.55px;line-height:22.55px;text-align:center;font-size:9px;color:#1414f0;-webkit-text-stroke:0.15px #1414f0;">详情</div>
<div class="a" style="left:1370px;top:469.0px;width:33px;height:15px;border-radius:8px;background:#c4c7ce;border:1px solid #c9cbbf"><div class="a" style="left:0;top:0;width:13px;height:13px;border-radius:50%;background:#fff"></div></div>
<div class="a" style="left:168.5px;top:488.05px;width:31.0px;height:22.55px;line-height:22.55px;text-align:center;font-size:10px;color:#111;font-weight:bold;">2</div>
<div class="a" style="left:204.5px;top:493.05px;width:11px;height:11px;border:1px solid #a5a5a5;border-radius:2.5px;background:#fff"></div>
<div class="a" style="left:228.4px;top:488.05px;height:22.55px;line-height:22.55px;font-size:9px;color:#f00;font-weight:bold;"><u>2#南变压器_3AH_431</u></div>
<div class="a" style="left:346.4px;top:488.05px;height:22.55px;line-height:22.55px;font-size:9px;color:#f00;font-weight:bold;">非经济运行</div>
<div class="a" style="left:447.5px;top:488.05px;width:87.89999999999998px;height:22.55px;line-height:22.55px;text-align:center;font-size:9px;color:#f00;font-weight:bold;">单次报警</div>
<div class="a" style="left:535.4px;top:488.05px;width:59.10000000000002px;height:22.55px;line-height:22.55px;text-align:center;font-size:9px;color:#f00;font-weight:bold;">级别<span style="font-family:Liberation Serif;font-size:10px;letter-spacing:-0.8px;margin-left:1px">II</span></div>
<div class="a" style="left:594.5px;top:488.05px;width:158.20000000000005px;height:22.55px;line-height:22.55px;text-align:center;font-size:10px;color:#f00;font-weight:bold;">2023-01-02 13:48:00</div>
<div class="a" style="left:752.7px;top:488.05px;width:117.69999999999993px;height:22.55px;line-height:22.55px;text-align:center;font-size:10px;color:#f00;font-weight:bold;">/</div>
<div class="a" style="left:877.4px;top:488.05px;height:22.55px;line-height:22.55px;font-size:9px;color:#f00;font-weight:bold;">周工</div>
<div class="a" style="left:946.4px;top:488.05px;height:22.55px;line-height:22.55px;font-size:9px;color:#f00;font-weight:bold;">周工</div>
<div class="a" style="left:1017.4px;top:488.05px;height:22.55px;line-height:22.55px;font-size:10px;font-style:italic;color:#f00;font-weight:bold;">/</div>
<div class="a" style="left:1078.8px;top:488.05px;width:108.0px;height:22.55px;line-height:22.55px;text-align:center;font-size:9px;color:#f00;font-weight:bold;">未处理</div>
<div class="a" style="left:1186.8px;top:488.05px;width:107.79999999999995px;height:22.55px;line-height:22.55px;text-align:center;font-size:9px;color:#f00;font-weight:bold;">未处理</div>
<div class="a" style="left:1294.6px;top:488.05px;width:58.90000000000009px;height:22.55px;line-height:22.55px;text-align:center;font-size:9px;color:#1414f0;-webkit-text-stroke:0.15px #1414f0;">详情</div>
<div class="a" style="left:1370px;top:491.55px;width:33px;height:15px;border-radius:8px;background:#c4c7ce;border:1px solid #c9cbbf"><div class="a" style="left:0;top:0;width:13px;height:13px;border-radius:50%;background:#fff"></div></div>
<div class="a" style="left:168.5px;top:510.6px;width:31.0px;height:22.55px;line-height:22.55px;text-align:center;font-size:10px;color:#111;">3</div>
<div class="a" style="left:204.5px;top:515.6px;width:11px;height:11px;border:1px solid #a5a5a5;border-radius:2.5px;background:#fff"></div>
<div class="a" style="left:228.4px;top:510.6px;height:22.55px;line-height:22.55px;font-size:9px;color:#f00;"><u>窑前除尘北风机_5AH_...</u></div>
<div class="a" style="left:346.4px;top:510.6px;height:22.55px;line-height:22.55px;font-size:9px;color:#f00;">负荷超限</div>
<div class="a" style="left:447.5px;top:510.6px;width:87.89999999999998px;height:22.55px;line-height:22.55px;text-align:center;font-size:9px;color:#f00;">单次报警</div>
<div class="a" style="left:535.4px;top:510.6px;width:59.10000000000002px;height:22.55px;line-height:22.55px;text-align:center;font-size:9px;color:#f00;">级别<span style="font-family:Liberation Serif;font-size:10px;letter-spacing:-0.8px;margin-left:1px">II</span></div>
<div class="a" style="left:594.5px;top:510.6px;width:158.20000000000005px;height:22.55px;line-height:22.55px;text-align:center;font-size:10px;color:#f00;">2022-12-29 10:47:49</div>
<div class="a" style="left:752.7px;top:510.6px;width:117.69999999999993px;height:22.55px;line-height:22.55px;text-align:center;font-size:10px;color:#f00;">/</div>
<div class="a" style="left:877.4px;top:510.6px;height:22.55px;line-height:22.55px;font-size:9px;color:#f00;">周工</div>
<div class="a" style="left:946.4px;top:510.6px;height:22.55px;line-height:22.55px;font-size:9px;color:#f00;">周工</div>
<div class="a" style="left:1017.4px;top:510.6px;height:22.55px;line-height:22.55px;font-size:10px;font-style:italic;color:#f00;">/</div>
<div class="a" style="left:1078.8px;top:510.6px;width:108.0px;height:22.55px;line-height:22.55px;text-align:center;font-size:9px;color:#f00;">已处理</div>
<div class="a" style="left:1186.8px;top:510.6px;width:107.79999999999995px;height:22.55px;line-height:22.55px;text-align:center;font-size:9px;color:#f00;">未处理</div>
<div class="a" style="left:1294.6px;top:510.6px;width:58.90000000000009px;height:22.55px;line-height:22.55px;text-align:center;font-size:9px;color:#1414f0;-webkit-text-stroke:0.15px #1414f0;">详情</div>
<div class="a" style="left:1370px;top:514.1px;width:33px;height:15px;border-radius:8px;background:#c4c7ce;border:1px solid #c9cbbf"><div class="a" style="left:0;top:0;width:13px;height:13px;border-radius:50%;background:#fff"></div></div>
<div class="a" style="left:168.5px;top:533.15px;width:31.0px;height:22.55px;line-height:22.55px;text-align:center;font-size:10px;color:#111;font-weight:bold;">4</div>
<div class="a" style="left:204.5px;top:538.15px;width:11px;height:11px;border:1px solid #a5a5a5;border-radius:2.5px;background:#fff"></div>
<div class="a" style="left:228.4px;top:533.15px;height:22.55px;line-height:22.55px;font-size:9px;color:#f00;font-weight:bold;"><u>潞兴回路II线157_611</u></div>
<div class="a" style="left:346.4px;top:533.15px;height:22.55px;line-height:22.55px;font-size:9px;color:#f00;font-weight:bold;">实时功率因数不达标</div>
<div class="a" style="left:447.5px;top:533.15px;width:87.89999999999998px;height:22.55px;line-height:22.55px;text-align:center;font-size:9px;color:#f00;font-weight:bold;">单次报警</div>
<div class="a" style="left:535.4px;top:533.15px;width:59.10000000000002px;height:22.55px;line-height:22.55px;text-align:center;font-size:9px;color:#f00;font-weight:bold;">级别<span style="font-family:Liberation Serif;font-size:10px;letter-spacing:-0.8px;margin-left:1px">II</span></div>
<div class="a" style="left:594.5px;top:533.15px;width:158.20000000000005px;height:22.55px;line-height:22.55px;text-align:center;font-size:10px;color:#f00;font-weight:bold;">2023-01-02 14:04:41</div>
<div class="a" style="left:752.7px;top:533.15px;width:117.69999999999993px;height:22.55px;line-height:22.55px;text-align:center;font-size:10px;color:#f00;font-weight:bold;">2023-01-02 14:15:33</div>
<div class="a" style="left:877.4px;top:533.15px;height:22.55px;line-height:22.55px;font-size:9px;color:#f00;font-weight:bold;">周工</div>
<div class="a" style="left:946.4px;top:533.15px;height:22.55px;line-height:22.55px;font-size:9px;color:#f00;font-weight:bold;">周工</div>
<div class="a" style="left:1017.4px;top:533.15px;height:22.55px;line-height:22.55px;font-size:10px;font-style:italic;color:#f00;font-weight:bold;">/</div>
<div class="a" style="left:1078.8px;top:533.15px;width:108.0px;height:22.55px;line-height:22.55px;text-align:center;font-size:9px;color:#f00;font-weight:bold;">未处理</div>
<div class="a" style="left:1186.8px;top:533.15px;width:107.79999999999995px;height:22.55px;line-height:22.55px;text-align:center;font-size:9px;color:#f00;font-weight:bold;">未处理</div>
<div class="a" style="left:1294.6px;top:533.15px;width:58.90000000000009px;height:22.55px;line-height:22.55px;text-align:center;font-size:9px;color:#1414f0;-webkit-text-stroke:0.15px #1414f0;">详情</div>
<div class="a" style="left:1370px;top:536.65px;width:33px;height:15px;border-radius:8px;background:#c4c7ce;border:1px solid #c9cbbf"><div class="a" style="left:0;top:0;width:13px;height:13px;border-radius:50%;background:#fff"></div></div>
<div class="a" style="left:168.5px;top:555.7px;width:31.0px;height:22.55px;line-height:22.55px;text-align:center;font-size:10px;color:#111;font-weight:bold;">5</div>
<div class="a" style="left:204.5px;top:560.7px;width:11px;height:11px;border:1px solid #a5a5a5;border-radius:2.5px;background:#fff"></div>
<div class="a" style="left:228.4px;top:555.7px;height:22.55px;line-height:22.55px;font-size:9px;color:#f00;font-weight:bold;"><u>1#烧结冷却风机_AH6_...</u></div>
<div class="a" style="left:346.4px;top:555.7px;height:22.55px;line-height:22.55px;font-size:9px;color:#f00;font-weight:bold;">负荷超限</div>
<div class="a" style="left:447.5px;top:555.7px;width:87.89999999999998px;height:22.55px;line-height:22.55px;text-align:center;font-size:9px;color:#f00;font-weight:bold;">连续报警</div>
<div class="a" style="left:535.4px;top:555.7px;width:59.10000000000002px;height:22.55px;line-height:22.55px;text-align:center;font-size:9px;color:#f00;font-weight:bold;">级别<span style="font-family:Liberation Serif;font-size:10px;letter-spacing:-0.8px;margin-left:1px">II</span></div>
<div class="a" style="left:594.5px;top:555.7px;width:158.20000000000005px;height:22.55px;line-height:22.55px;text-align:center;font-size:10px;color:#f00;font-weight:bold;">2023-01-02 13:37:49</div>
<div class="a" style="left:752.7px;top:555.7px;width:117.69999999999993px;height:22.55px;line-height:22.55px;text-align:center;font-size:10px;color:#f00;font-weight:bold;">2023-01-02 13:41:19</div>
<div class="a" style="left:877.4px;top:555.7px;height:22.55px;line-height:22.55px;font-size:9px;color:#f00;font-weight:bold;">周工</div>
<div class="a" style="left:946.4px;top:555.7px;height:22.55px;line-height:22.55px;font-size:9px;color:#f00;font-weight:bold;">周工</div>
<div class="a" style="left:1017.4px;top:555.7px;height:22.55px;line-height:22.55px;font-size:10px;font-style:italic;color:#f00;font-weight:bold;">/</div>
<div class="a" style="left:1078.8px;top:555.7px;width:108.0px;height:22.55px;line-height:22.55px;text-align:center;font-size:9px;color:#f00;font-weight:bold;">未处理</div>
<div class="a" style="left:1186.8px;top:555.7px;width:107.79999999999995px;height:22.55px;line-height:22.55px;text-align:center;font-size:9px;color:#f00;font-weight:bold;">未处理</div>
<div class="a" style="left:1294.6px;top:555.7px;width:58.90000000000009px;height:22.55px;line-height:22.55px;text-align:center;font-size:9px;color:#1414f0;-webkit-text-stroke:0.15px #1414f0;">详情</div>
<div class="a" style="left:1370px;top:559.2px;width:33px;height:15px;border-radius:8px;background:#c4c7ce;border:1px solid #c9cbbf"><div class="a" style="left:0;top:0;width:13px;height:13px;border-radius:50%;background:#fff"></div></div>
<div class="a" style="left:168.5px;top:578.25px;width:31.0px;height:22.55px;line-height:22.55px;text-align:center;font-size:10px;color:#111;font-weight:bold;">6</div>
<div class="a" style="left:204.5px;top:583.25px;width:11px;height:11px;border:1px solid #a5a5a5;border-radius:2.5px;background:#fff"></div>
<div class="a" style="left:228.4px;top:578.25px;height:22.55px;line-height:22.55px;font-size:9px;color:#f00;font-weight:bold;"><u>1#烧结冷却风机_AH6_...</u></div>
<div class="a" style="left:346.4px;top:578.25px;height:22.55px;line-height:22.55px;font-size:9px;color:#f00;font-weight:bold;">负荷超限</div>
<div class="a" style="left:447.5px;top:578.25px;width:87.89999999999998px;height:22.55px;line-height:22.55px;text-align:center;font-size:9px;color:#f00;font-weight:bold;">连续报警</div>
<div class="a" style="left:535.4px;top:578.25px;width:59.10000000000002px;height:22.55px;line-height:22.55px;text-align:center;font-size:9px;color:#f00;font-weight:bold;">级别<span style="font-family:Liberation Serif;font-size:10px;letter-spacing:-0.8px;margin-left:1px">II</span></div>
<div class="a" style="left:594.5px;top:578.25px;width:158.20000000000005px;height:22.55px;line-height:22.55px;text-align:center;font-size:10px;color:#f00;font-weight:bold;">2023-01-02 13:27:11</div>
<div class="a" style="left:752.7px;top:578.25px;width:117.69999999999993px;height:22.55px;line-height:22.55px;text-align:center;font-size:10px;color:#f00;font-weight:bold;">2023-01-02 13:36:36</div>
<div class="a" style="left:877.4px;top:578.25px;height:22.55px;line-height:22.55px;font-size:9px;color:#f00;font-weight:bold;">周工</div>
<div class="a" style="left:946.4px;top:578.25px;height:22.55px;line-height:22.55px;font-size:9px;color:#f00;font-weight:bold;">周工</div>
<div class="a" style="left:1017.4px;top:578.25px;height:22.55px;line-height:22.55px;font-size:10px;font-style:italic;color:#f00;font-weight:bold;">/</div>
<div class="a" style="left:1078.8px;top:578.25px;width:108.0px;height:22.55px;line-height:22.55px;text-align:center;font-size:9px;color:#f00;font-weight:bold;">未处理</div>
<div class="a" style="left:1186.8px;top:578.25px;width:107.79999999999995px;height:22.55px;line-height:22.55px;text-align:center;font-size:9px;color:#f00;font-weight:bold;">未处理</div>
<div class="a" style="left:1294.6px;top:578.25px;width:58.90000000000009px;height:22.55px;line-height:22.55px;text-align:center;font-size:9px;color:#1414f0;-webkit-text-stroke:0.15px #1414f0;">详情</div>
<div class="a" style="left:1370px;top:581.75px;width:33px;height:15px;border-radius:8px;background:#c4c7ce;border:1px solid #c9cbbf"><div class="a" style="left:0;top:0;width:13px;height:13px;border-radius:50%;background:#fff"></div></div>
<div class="a" style="left:168.5px;top:600.8px;width:31.0px;height:22.55px;line-height:22.55px;text-align:center;font-size:10px;color:#111;font-weight:bold;">7</div>
<div class="a" style="left:204.5px;top:605.8px;width:11px;height:11px;border:1px solid #a5a5a5;border-radius:2.5px;background:#fff"></div>
<div class="a" style="left:228.4px;top:600.8px;height:22.55px;line-height:22.55px;font-size:9px;color:#f00;font-weight:bold;"><u>潞兴回路II线157_611</u></div>
<div class="a" style="left:346.4px;top:600.8px;height:22.55px;line-height:22.55px;font-size:9px;color:#f00;font-weight:bold;">实时功率因数不达标</div>
<div class="a" style="left:447.5px;top:600.8px;width:87.89999999999998px;height:22.55px;line-height:22.55px;text-align:center;font-size:9px;color:#f00;font-weight:bold;">单次报警</div>
<div class="a" style="left:535.4px;top:600.8px;width:59.10000000000002px;height:22.55px;line-height:22.55px;text-align:center;font-size:9px;color:#f00;font-weight:bold;">级别<span style="font-family:Liberation Serif;font-size:10px;letter-spacing:-0.8px;margin-left:1px">II</span></div>
<div class="a" style="left:594.5px;top:600.8px;width:158.20000000000005px;height:22.55px;line-height:22.55px;text-align:center;font-size:10px;color:#f00;font-weight:bold;">2023-01-02 13:24:43</div>
<div class="a" style="left:752.7px;top:600.8px;width:117.69999999999993px;height:22.55px;line-height:22.55px;text-align:center;font-size:10px;color:#f00;font-weight:bold;">2023-01-02 13:45:33</div>
<div class="a" style="left:877.4px;top:600.8px;height:22.55px;line-height:22.55px;font-size:9px;color:#f00;font-weight:bold;">周工</div>
<div class="a" style="left:946.4px;top:600.8px;height:22.55px;line-height:22.55px;font-size:9px;color:#f00;font-weight:bold;">周工</div>
<div class="a" style="left:1017.4px;top:600.8px;height:22.55px;line-height:22.55px;font-size:10px;font-style:italic;color:#f00;font-weight:bold;">/</div>
<div class="a" style="left:1078.8px;top:600.8px;width:108.0px;height:22.55px;line-height:22.55px;text-align:center;font-size:9px;color:#f00;font-weight:bold;">未处理</div>
<div class="a" style="left:1186.8px;top:600.8px;width:107.79999999999995px;height:22.55px;line-height:22.55px;text-align:center;font-size:9px;color:#f00;font-weight:bold;">未处理</div>
<div class="a" style="left:1294.6px;top:600.8px;width:58.90000000000009px;height:22.55px;line-height:22.55px;text-align:center;font-size:9px;color:#1414f0;-webkit-text-stroke:0.15px #1414f0;">详情</div>
<div class="a" style="left:1370px;top:604.3px;width:33px;height:15px;border-radius:8px;background:#c4c7ce;border:1px solid #c9cbbf"><div class="a" style="left:0;top:0;width:13px;height:13px;border-radius:50%;background:#fff"></div></div>
<div class="a" style="left:168.5px;top:623.35px;width:31.0px;height:22.55px;line-height:22.55px;text-align:center;font-size:10px;color:#111;font-weight:bold;">8</div>
<div class="a" style="left:204.5px;top:628.35px;width:11px;height:11px;border:1px solid #a5a5a5;border-radius:2.5px;background:#fff"></div>
<div class="a" style="left:228.4px;top:623.35px;height:22.55px;line-height:22.55px;font-size:9px;color:#f00;font-weight:bold;"><u>1#烧结冷却风机_AH6_...</u></div>
<div class="a" style="left:346.4px;top:623.35px;height:22.55px;line-height:22.55px;font-size:9px;color:#f00;font-weight:bold;">负荷超限</div>
<div class="a" style="left:447.5px;top:623.35px;width:87.89999999999998px;height:22.55px;line-height:22.55px;text-align:center;font-size:9px;color:#f00;font-weight:bold;">连续报警</div>
<div class="a" style="left:535.4px;top:623.35px;width:59.10000000000002px;height:22.55px;line-height:22.55px;text-align:center;font-size:9px;color:#f00;font-weight:bold;">级别<span style="font-family:Liberation Serif;font-size:10px;letter-spacing:-0.8px;margin-left:1px">II</span></div>
<div class="a" style="left:594.5px;top:623.35px;width:158.20000000000005px;height:22.55px;line-height:22.55px;text-align:center;font-size:10px;color:#f00;font-weight:bold;">2023-01-02 13:13:16</div>
<div class="a" style="left:752.7px;top:623.35px;width:117.69999999999993px;height:22.55px;line-height:22.55px;text-align:center;font-size:10px;color:#f00;font-weight:bold;">2023-01-02 13:24:38</div>
<div class="a" style="left:877.4px;top:623.35px;height:22.55px;line-height:22.55px;font-size:9px;color:#f00;font-weight:bold;">周工</div>
<div class="a" style="left:946.4px;top:623.35px;height:22.55px;line-height:22.55px;font-size:9px;color:#f00;font-weight:bold;">周工</div>
<div class="a" style="left:1017.4px;top:623.35px;height:22.55px;line-height:22.55px;font-size:10px;font-style:italic;color:#f00;font-weight:bold;">/</div>
<div class="a" style="left:1078.8px;top:623.35px;width:108.0px;height:22.55px;line-height:22.55px;text-align:center;font-size:9px;color:#f00;font-weight:bold;">未处理</div>
<div class="a" style="left:1186.8px;top:623.35px;width:107.79999999999995px;height:22.55px;line-height:22.55px;text-align:center;font-size:9px;color:#f00;font-weight:bold;">未处理</div>
<div class="a" style="left:1294.6px;top:623.35px;width:58.90000000000009px;height:22.55px;line-height:22.55px;text-align:center;font-size:9px;color:#1414f0;-webkit-text-stroke:0.15px #1414f0;">详情</div>
<div class="a" style="left:1370px;top:626.85px;width:33px;height:15px;border-radius:8px;background:#c4c7ce;border:1px solid #c9cbbf"><div class="a" style="left:0;top:0;width:13px;height:13px;border-radius:50%;background:#fff"></div></div>
<div class="a" style="left:168.5px;top:645.9px;width:31.0px;height:22.55px;line-height:22.55px;text-align:center;font-size:10px;color:#111;font-weight:bold;">9</div>
<div class="a" style="left:204.5px;top:650.9px;width:11px;height:11px;border:1px solid #a5a5a5;border-radius:2.5px;background:#fff"></div>
<div class="a" style="left:228.4px;top:645.9px;height:22.55px;line-height:22.55px;font-size:9px;color:#f00;font-weight:bold;"><u>1#烧结冷却风机_AH6_...</u></div>
<div class="a" style="left:346.4px;top:645.9px;height:22.55px;line-height:22.55px;font-size:9px;color:#f00;font-weight:bold;">负荷超限</div>
<div class="a" style="left:447.5px;top:645.9px;width:87.89999999999998px;height:22.55px;line-height:22.55px;text-align:center;font-size:9px;color:#f00;font-weight:bold;">连续报警</div>
<div class="a" style="left:535.4px;top:645.9px;width:59.10000000000002px;height:22.55px;line-height:22.55px;text-align:center;font-size:9px;color:#f00;font-weight:bold;">级别<span style="font-family:Liberation Serif;font-size:10px;letter-spacing:-0.8px;margin-left:1px">II</span></div>
<div class="a" style="left:594.5px;top:645.9px;width:158.20000000000005px;height:22.55px;line-height:22.55px;text-align:center;font-size:10px;color:#f00;font-weight:bold;">2023-01-02 13:09:37</div>
<div class="a" style="left:752.7px;top:645.9px;width:117.69999999999993px;height:22.55px;line-height:22.55px;text-align:center;font-size:10px;color:#f00;font-weight:bold;">2023-01-02 13:12:56</div>
<div class="a" style="left:877.4px;top:645.9px;height:22.55px;line-height:22.55px;font-size:9px;color:#f00;font-weight:bold;">周工</div>
<div class="a" style="left:946.4px;top:645.9px;height:22.55px;line-height:22.55px;font-size:9px;color:#f00;font-weight:bold;">周工</div>
<div class="a" style="left:1017.4px;top:645.9px;height:22.55px;line-height:22.55px;font-size:10px;font-style:italic;color:#f00;font-weight:bold;">/</div>
<div class="a" style="left:1078.8px;top:645.9px;width:108.0px;height:22.55px;line-height:22.55px;text-align:center;font-size:9px;color:#f00;font-weight:bold;">未处理</div>
<div class="a" style="left:1186.8px;top:645.9px;width:107.79999999999995px;height:22.55px;line-height:22.55px;text-align:center;font-size:9px;color:#f00;font-weight:bold;">未处理</div>
<div class="a" style="left:1294.6px;top:645.9px;width:58.90000000000009px;height:22.55px;line-height:22.55px;text-align:center;font-size:9px;color:#1414f0;-webkit-text-stroke:0.15px #1414f0;">详情</div>
<div class="a" style="left:1370px;top:649.4px;width:33px;height:15px;border-radius:8px;background:#c4c7ce;border:1px solid #c9cbbf"><div class="a" style="left:0;top:0;width:13px;height:13px;border-radius:50%;background:#fff"></div></div>
<div class="a" style="left:168.5px;top:668.45px;width:31.0px;height:22.55px;line-height:22.55px;text-align:center;font-size:10px;color:#111;font-weight:bold;">10</div>
<div class="a" style="left:204.5px;top:673.45px;width:11px;height:11px;border:1px solid #a5a5a5;border-radius:2.5px;background:#fff"></div>
<div class="a" style="left:228.4px;top:668.45px;height:22.55px;line-height:22.55px;font-size:9px;color:#f00;font-weight:bold;"><u>1#烧结冷却风机_AH6_...</u></div>
<div class="a" style="left:346.4px;top:668.45px;height:22.55px;line-height:22.55px;font-size:9px;color:#f00;font-weight:bold;">负荷超限</div>
<div class="a" style="left:447.5px;top:668.45px;width:87.89999999999998px;height:22.55px;line-height:22.55px;text-align:center;font-size:9px;color:#f00;font-weight:bold;">连续报警</div>
<div class="a" style="left:535.4px;top:668.45px;width:59.10000000000002px;height:22.55px;line-height:22.55px;text-align:center;font-size:9px;color:#f00;font-weight:bold;">级别<span style="font-family:Liberation Serif;font-size:10px;letter-spacing:-0.8px;margin-left:1px">II</span></div>
<div class="a" style="left:594.5px;top:668.45px;width:158.20000000000005px;height:22.55px;line-height:22.55px;text-align:center;font-size:10px;color:#f00;font-weight:bold;">2023-01-02 12:11:59</div>
<div class="a" style="left:752.7px;top:668.45px;width:117.69999999999993px;height:22.55px;line-height:22.55px;text-align:center;font-size:10px;color:#f00;font-weight:bold;">2023-01-02 13:03:33</div>
<div class="a" style="left:877.4px;top:668.45px;height:22.55px;line-height:22.55px;font-size:9px;color:#f00;font-weight:bold;">周工</div>
<div class="a" style="left:946.4px;top:668.45px;height:22.55px;line-height:22.55px;font-size:9px;color:#f00;font-weight:bold;">周工</div>
<div class="a" style="left:1017.4px;top:668.45px;height:22.55px;line-height:22.55px;font-size:10px;font-style:italic;color:#f00;font-weight:bold;">/</div>
<div class="a" style="left:1078.8px;top:668.45px;width:108.0px;height:22.55px;line-height:22.55px;text-align:center;font-size:9px;color:#f00;font-weight:bold;">未处理</div>
<div class="a" style="left:1186.8px;top:668.45px;width:107.79999999999995px;height:22.55px;line-height:22.55px;text-align:center;font-size:9px;color:#f00;font-weight:bold;">未处理</div>
<div class="a" style="left:1294.6px;top:668.45px;width:58.90000000000009px;height:22.55px;line-height:22.55px;text-align:center;font-size:9px;color:#1414f0;-webkit-text-stroke:0.15px #1414f0;">详情</div>
<div class="a" style="left:1370px;top:671.95px;width:33px;height:15px;border-radius:8px;background:#c4c7ce;border:1px solid #c9cbbf"><div class="a" style="left:0;top:0;width:13px;height:13px;border-radius:50%;background:#fff"></div></div>
<div class="a" style="left:180px;top:700px;font-size:10px;color:#5b8ef5;line-height:16px;letter-spacing:-0.35px">共 1139 条记录</div>
<div class="a" style="left:1205px;top:697px;width:19px;height:19px;border:1px solid #c9c9c9;background:#fff"><svg class="a" style="left:5px;top:4px" width="8" height="10" viewBox="0 0 8 10"><path d="M6 0.5 L1.5 5 L6 9.5Z" fill="#222"/></svg></div>
<div class="a" style="left:1228px;top:697px;width:20px;height:19px;border:1px solid #c9c9c9;background:#fff"><svg class="a" style="left:6px;top:4px" width="8" height="10" viewBox="0 0 8 10" fill="none" stroke="#333" stroke-width="1.1"><path d="M6 0.5 L1.5 5 L6 9.5"/></svg></div>
<div class="a" style="left:1254px;top:699px;font-size:10.5px;color:#555;line-height:16px">第</div>
<div class="a" style="left:1267px;top:698px;width:23px;height:18px;border:1px solid #c9c9c9;font-size:10px;line-height:16px;text-align:center;color:#2a3a6a">1</div>
<div class="a" style="left:1296px;top:699px;font-size:10.5px;color:#555;line-height:16px">共</div>
<div class="a" style="left:1313px;top:699px;font-size:10.5px;color:#555;line-height:16px">114</div>
<div class="a" style="left:1336px;top:699px;font-size:10.5px;color:#555;line-height:16px">页</div>
<div class="a" style="left:1349px;top:697px;width:20px;height:19px;border:1px solid #c9c9c9;background:#fff"><svg class="a" style="left:6px;top:4px" width="8" height="10" viewBox="0 0 8 10" fill="none" stroke="#333" stroke-width="1.1"><path d="M1.5 0.5 L6 5 L1.5 9.5"/></svg></div>
<div class="a" style="left:1372px;top:697px;width:20px;height:19px;border:1px solid #c9c9c9;background:#fff"><svg class="a" style="left:6px;top:4px" width="8" height="10" viewBox="0 0 8 10"><path d="M1.5 0.5 L6 5 L1.5 9.5Z" fill="#222"/></svg></div>
<div class="a" style="left:1396px;top:697px;width:19px;height:19px;border:1px solid #c9c9c9;background:#fff"><svg class="a" style="left:2px;top:2px" width="14" height="14" viewBox="0 0 14 14" fill="none" stroke="#444" stroke-width="1.1"><path d="M11.5 7 A4.7 4.7 0 1 1 8.5 2.6"/><path d="M8 0.8 L10.2 2.8 L7.8 4.6"/></svg></div>
</body></html>
